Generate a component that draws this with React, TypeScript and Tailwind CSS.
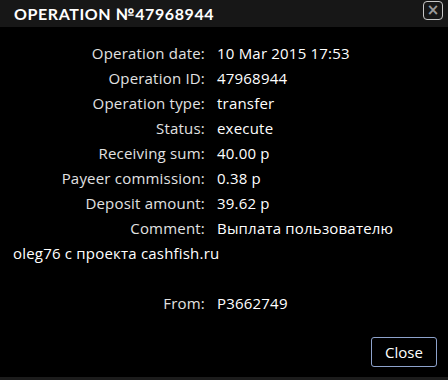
const rows: [string, string][] = [
  ["Operation date:", "10 Mar 2015 17:53"],
  ["Operation ID:", "47968944"],
  ["Operation type:", "transfer"],
  ["Status:", "execute"],
  ["Receiving sum:", "40.00 р"],
  ["Payeer commission:", "0.38 р"],
  ["Deposit amount:", "39.62 р"],
];

export default function App() {
  return (
    <div className="w-[448px] h-[380px] bg-black flex flex-col overflow-hidden">
      <div className="h-[27px] bg-[#171717] flex items-center justify-between pl-[14px] pr-[5px] shrink-0">
        <h1 className="text-white font-bold text-[16px] tracking-[0.6px] font-['Lato',sans-serif] pt-[1px]">
          OPERATION №47968944
        </h1>
        <button className="w-[20px] h-[19px] -mt-[7px] border border-[#c8c8c8] rounded-[4px] flex items-center justify-center text-[#9a9a9a] text-[15px] font-bold leading-none font-['DejaVu_Sans',sans-serif]">
          ×
        </button>
      </div>

      <div className="flex-1 pt-[14px] px-[10px] text-[15px] tracking-[0.2px] leading-[25px] font-['Open_Sans',sans-serif]">
        {rows.map(([label, value]) => (
          <div key={label} className="flex">
            <span className="w-[195px] text-right text-[#e2e2e2] shrink-0">{label}</span>
            <span className="ml-[12px] text-white">{value}</span>
          </div>
        ))}
        <p className="w-[400px] pl-[3px] text-white">
          <span className="inline-block w-[192px] text-right text-[#e2e2e2] mr-[12px]">Comment:</span>
          Выплата пользователю oleg76 с проекта cashfish.ru
        </p>
        <div className="h-[25px]" />
        <div className="flex">
          <span className="w-[195px] text-right text-[#e2e2e2] shrink-0">From:</span>
          <span className="ml-[12px] text-white">P3662749</span>
        </div>
      </div>

      <div className="flex justify-end pr-[11px] pb-[10px]">
        <button className="w-[66px] h-[30px] border border-[#8ea3cc] rounded-[3px] bg-black text-white text-[15px] font-['Open_Sans',sans-serif]">
          Close
        </button>
      </div>
      <div className="h-[3px] bg-[#1c1c1c] shrink-0" />
    </div>
  );
}
